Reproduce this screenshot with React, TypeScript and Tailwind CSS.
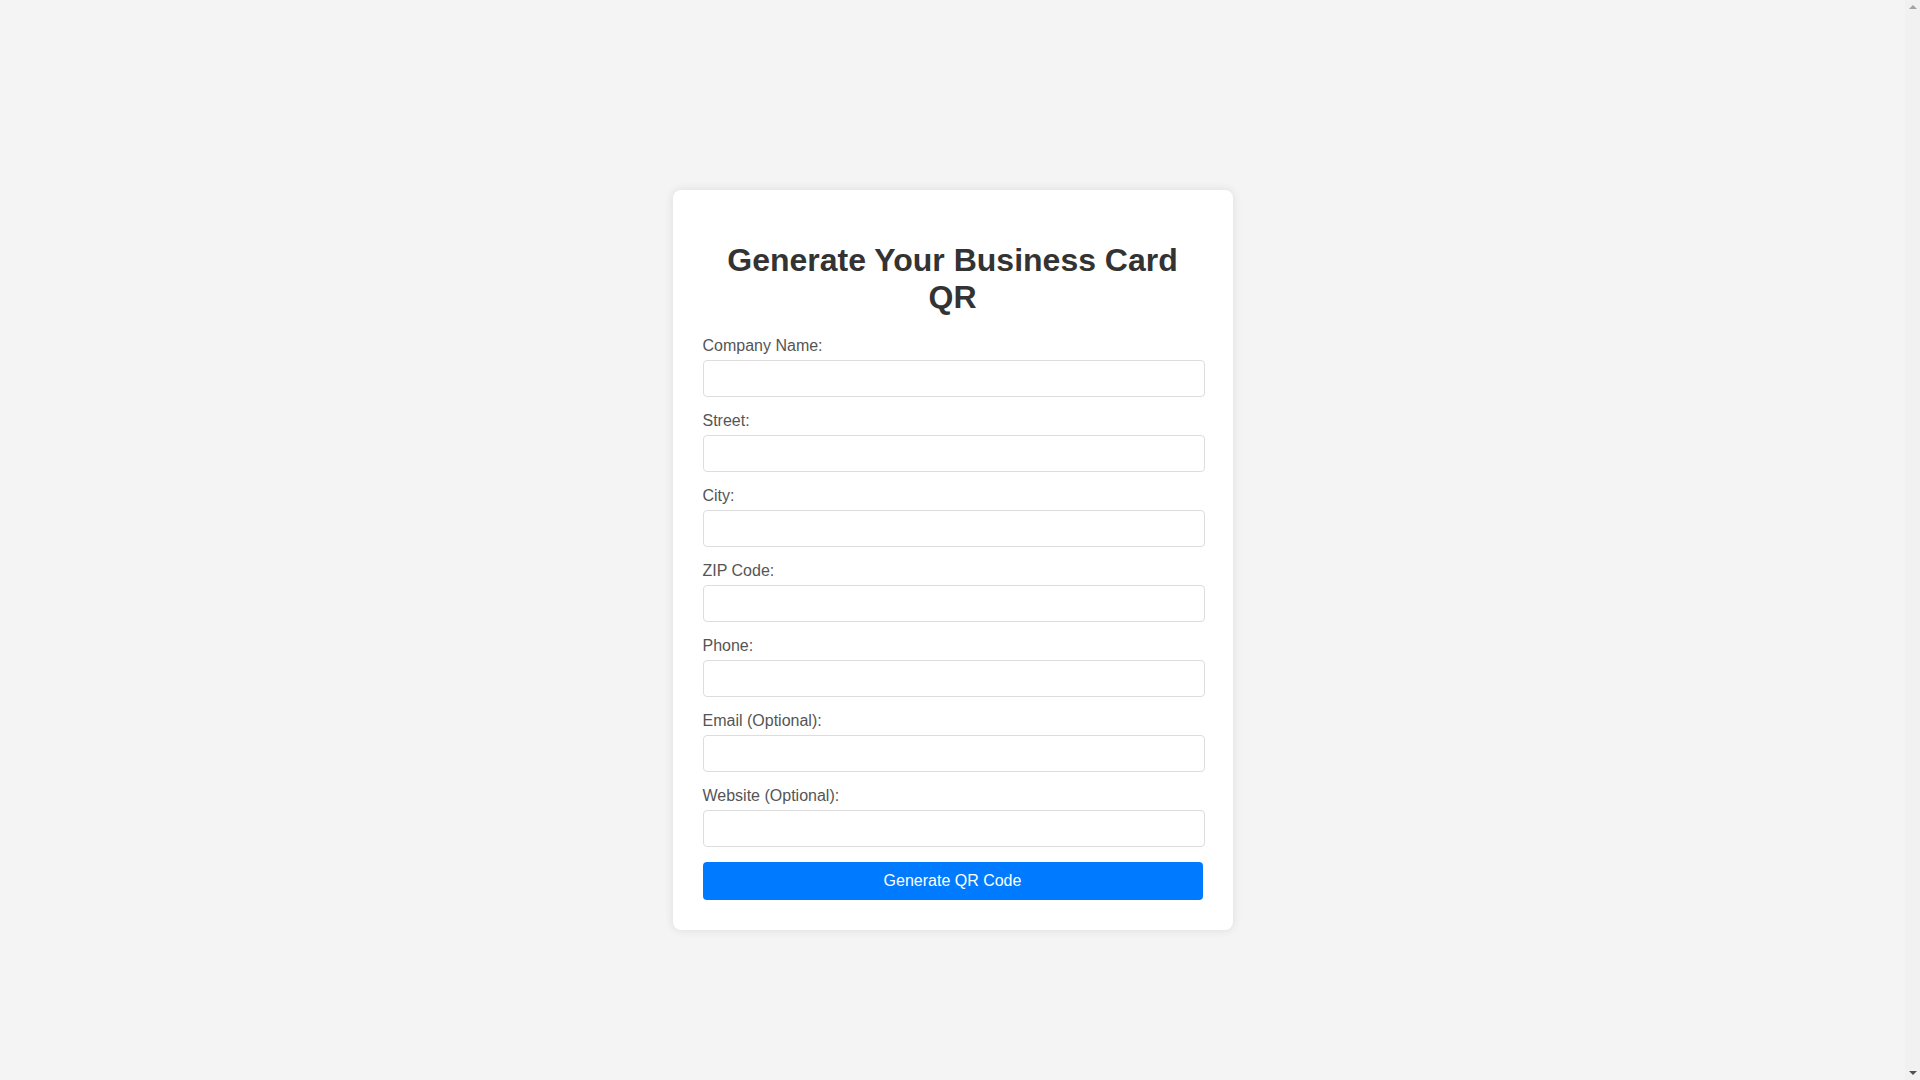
import { useState } from 'react';

const fields = [
  { id: 'company', label: 'Company Name:', type: 'text' },
  { id: 'street', label: 'Street:', type: 'text' },
  { id: 'city', label: 'City:', type: 'text' },
  { id: 'zip', label: 'ZIP Code:', type: 'text' },
  { id: 'phone', label: 'Phone:', type: 'tel' },
  { id: 'email', label: 'Email (Optional):', type: 'email' },
  { id: 'website', label: 'Website (Optional):', type: 'url' },
];

export default function App() {
  const [values, setValues] = useState<Record<string, string>>({});

  return (
    <div className="box-content min-h-screen py-5 pr-[15px] flex items-center justify-center bg-[#f4f4f4] text-[16px] leading-[normal] font-['Liberation_Sans',Arial,sans-serif]">
      <div className="w-[560px] bg-white p-[30px] rounded-lg shadow-[0_0_10px_rgba(0,0,0,0.1)]">
        <h1 className="text-[32px] leading-[normal] font-bold text-[#333] text-center my-[0.67em]">
          Generate Your Business Card QR
        </h1>
        <form onSubmit={(e) => e.preventDefault()}>
          {fields.map((f) => (
            <div key={f.id}>
              <label htmlFor={f.id} className="block mb-[5px] text-[#555]">
                {f.label}
              </label>
              <input
                id={f.id}
                type={f.type}
                value={values[f.id] ?? ''}
                onChange={(e) => setValues({ ...values, [f.id]: e.target.value })}
                className="block w-[502px] h-[37px] mb-[15px] px-2 border border-[#ddd] rounded bg-white outline-none"
              />
            </div>
          ))}
          <button
            type="submit"
            className="block w-full h-[38px] bg-[#007bff] text-white rounded cursor-pointer"
          >
            Generate QR Code
          </button>
        </form>
      </div>

      {/* page scrollbar track */}
      <div className="fixed top-0 right-0 w-[15px] h-screen bg-[#f1f1f1] flex flex-col justify-between items-center py-[5px]">
        <span className="w-0 h-0 border-x-[4px] border-x-transparent border-b-[4px] border-b-[#a3a3a3]" />
        <span className="w-0 h-0 border-x-[4px] border-x-transparent border-t-[4px] border-t-[#505050]" />
      </div>
    </div>
  );
}
